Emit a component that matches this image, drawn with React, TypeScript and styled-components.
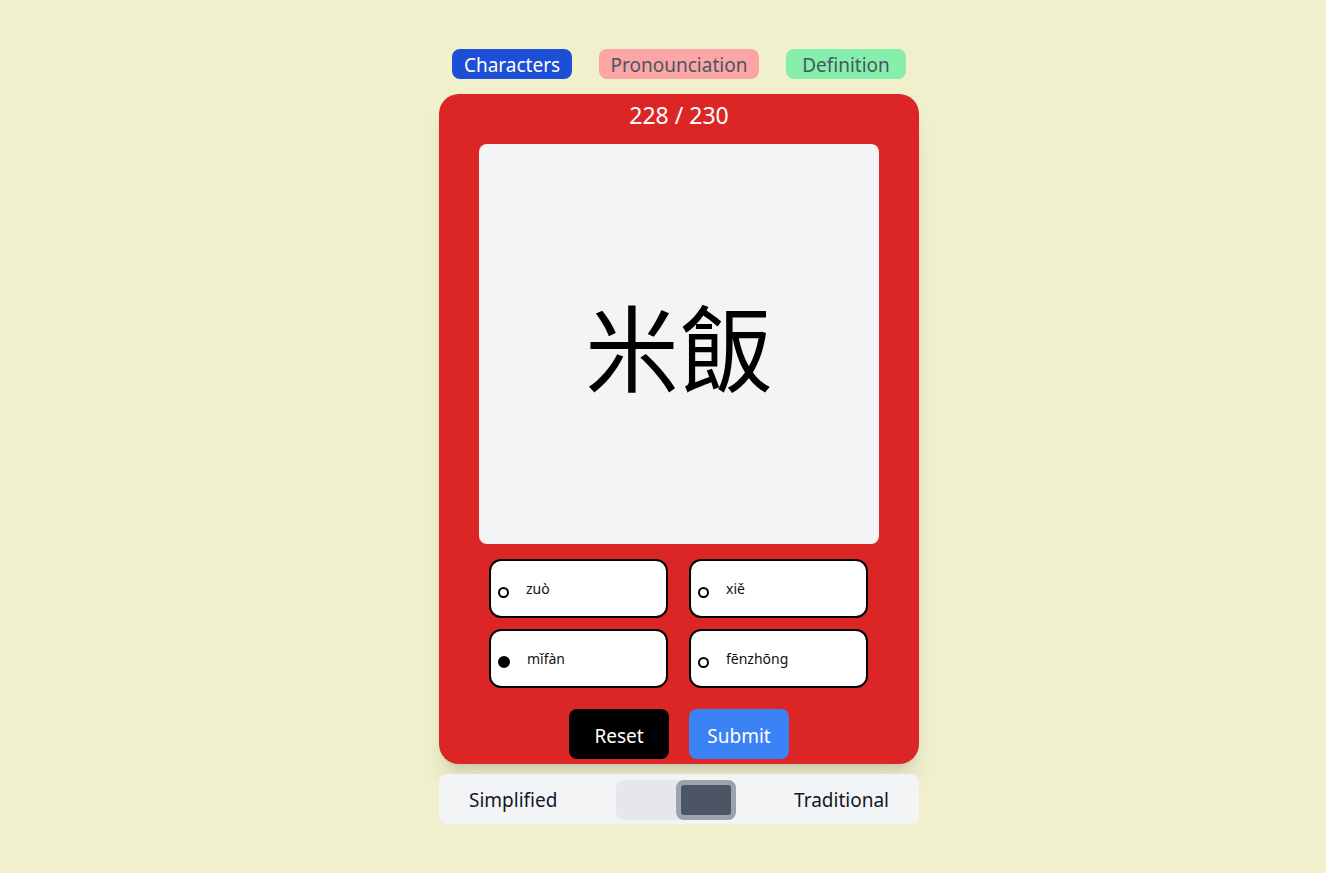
import React from "react";
import styled, { createGlobalStyle } from "styled-components";

const Global = createGlobalStyle`
  html, body { margin: 0; padding: 0; background: #f0f0cd; }
  body { font-family: "Noto Sans", "Noto Sans CJK TC", sans-serif; }
  * { box-sizing: border-box; }
`;

const Page = styled.div`
  display: flex;
  flex-direction: column;
  align-items: center;
  padding-top: 49px;
  padding-left: 32px;
  min-height: 873px;
`;

const Tabs = styled.div`
  display: flex;
  gap: 27px;
  margin-bottom: 15px;
`;

const Tab = styled.button<{ $bg: string; $fg: string; $w: number }>`
  height: 30px;
  width: ${(p) => p.$w}px;
  border: none;
  border-radius: 8px;
  background: ${(p) => p.$bg};
  color: ${(p) => p.$fg};
  font-family: inherit;
  font-size: 19px;
  line-height: 30px;
  padding: 1px 0 0;
`;

const Card = styled.div`
  width: 480px;
  height: 670px;
  background: #dc2626;
  border-radius: 20px;
  box-shadow: 0 20px 25px -5px rgba(0, 0, 0, 0.1), 0 8px 10px -6px rgba(0, 0, 0, 0.1);
  display: flex;
  flex-direction: column;
  align-items: center;
  padding-top: 5px;
`;

const Count = styled.div`
  color: #fff;
  font-size: 23px;
  line-height: 32px;
  height: 32px;
  margin-bottom: 13px;
`;

const Display = styled.div`
  width: 400px;
  height: 400px;
  background: #f3f4f6;
  border-radius: 8px;
  display: flex;
  align-items: center;
  justify-content: center;
  font-family: "Noto Sans CJK TC", "Noto Sans CJK SC", sans-serif;
  font-size: 94px;
  color: #000;
  margin-bottom: 15px;
`;

const Options = styled.div`
  display: grid;
  grid-template-columns: 179px 179px;
  column-gap: 21px;
  row-gap: 11px;
  margin-bottom: 21px;
  margin-left: -1px;
`;

const Option = styled.label`
  height: 59px;
  border: 2px solid #000;
  border-radius: 12px;
  background: #fff;
  display: flex;
  align-items: center;
  padding-left: 7px;
  gap: 17px;
  font-size: 14px;
  color: #111;
`;

const Radio = styled.span<{ $on: boolean }>`
  width: ${(p) => (p.$on ? 12 : 11)}px;
  height: ${(p) => (p.$on ? 12 : 11)}px;
  border-radius: 50%;
  border: 2px solid #000;
  background: ${(p) => (p.$on ? "#000" : "#fff")};
  margin-top: 7px;
  flex-shrink: 0;
`;

const OptText = styled.span`
  margin-top: 0;
`;

const Actions = styled.div`
  display: flex;
  gap: 20px;
`;

const Action = styled.button<{ $bg: string }>`
  width: 100px;
  height: 50px;
  border: none;
  border-radius: 8px;
  background: ${(p) => p.$bg};
  color: #fff;
  font-family: inherit;
  font-size: 19px;
  padding: 3px 0 0;
`;

const ToggleBar = styled.div`
  width: 480px;
  height: 50px;
  margin-top: 10px;
  background: #f3f4f6;
  border-radius: 8px;
  display: flex;
  align-items: center;
  justify-content: space-between;
  padding: 1px 30px 0;
  font-size: 19px;
  color: #111827;
`;

const Track = styled.div`
  width: 120px;
  height: 40px;
  background: #e5e7eb;
  border-radius: 8px;
  display: flex;
  justify-content: flex-end;
`;

const Knob = styled.div`
  width: 60px;
  height: 40px;
  border-radius: 8px;
  background: #4b5563;
  border: 5px solid #9ca3af;
`;

const options = [
  { t: "zuò", on: false },
  { t: "xiě", on: false },
  { t: "mǐfàn", on: true },
  { t: "fēnzhōng", on: false },
];

export default function App() {
  return (
    <>
      <Global />
      <Page>
        <Tabs>
          <Tab $bg="#1d4ed8" $fg="#fff" $w={120}>Characters</Tab>
          <Tab $bg="#fca5a5" $fg="#4b5563" $w={160}>Pronounciation</Tab>
          <Tab $bg="#86efac" $fg="#4b5563" $w={120}>Definition</Tab>
        </Tabs>
        <Card>
          <Count>228 / 230</Count>
          <Display>米飯</Display>
          <Options>
            {options.map((o) => (
              <Option key={o.t}>
                <Radio $on={o.on} />
                <OptText>{o.t}</OptText>
              </Option>
            ))}
          </Options>
          <Actions>
            <Action $bg="#000">Reset</Action>
            <Action $bg="#3b82f6">Submit</Action>
          </Actions>
        </Card>
        <ToggleBar>
          <span>Simplified</span>
          <Track>
            <Knob />
          </Track>
          <span>Traditional</span>
        </ToggleBar>
      </Page>
    </>
  );
}
